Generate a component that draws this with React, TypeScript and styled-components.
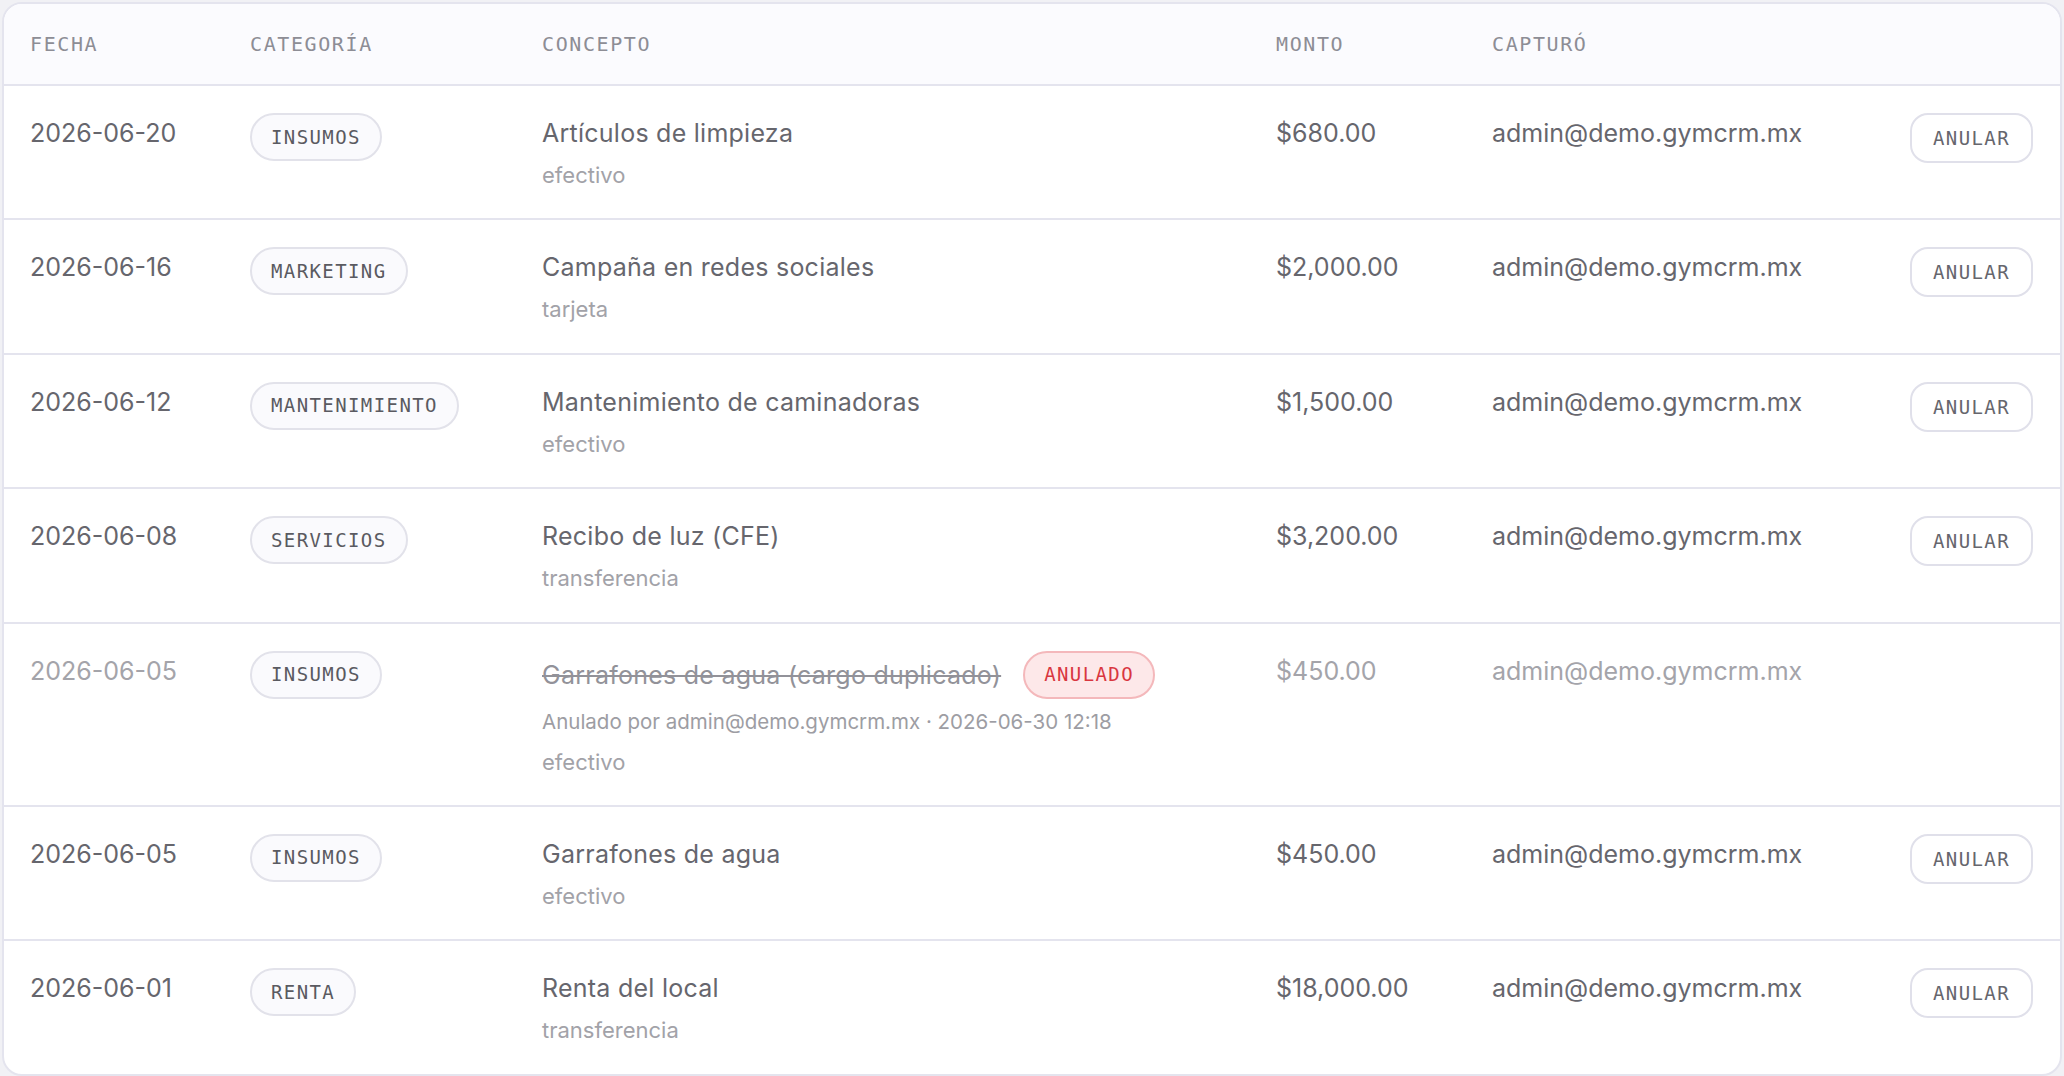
import React from 'react';
import styled, { createGlobalStyle } from 'styled-components';

const GlobalStyle = createGlobalStyle`
  html, body {
    margin: 0;
    padding: 0;
    background: #f1f1f5;
  }
  * {
    box-sizing: border-box;
  }
`;

const COLUMNS = '220px 292px 734px 216px 1fr 180px';
const SANS = `Inter, "Noto Sans", "Liberation Sans", sans-serif`;
const MONO = `"DejaVu Sans Mono", "Liberation Mono", monospace`;

const Page = styled.div`
  padding: 2px 2px 0 2px;
  height: 1076px;
  overflow: hidden;
`;

const Card = styled.div`
  background: #ffffff;
  border: 2px solid #e4e4ee;
  border-radius: 20px;
  overflow: hidden;
`;

const HeaderRow = styled.div`
  display: grid;
  grid-template-columns: ${COLUMNS};
  align-items: center;
  height: 82px;
  background: #fbfbfe;
  border-bottom: 2px solid #e4e4ee;
`;

const HeadCell = styled.div`
  padding-left: 26px;
  font-family: ${MONO};
  font-size: 20px;
  letter-spacing: 1.6px;
  color: #8d8d95;
`;

const Row = styled.div<{ $last?: boolean }>`
  display: grid;
  grid-template-columns: ${COLUMNS};
  align-items: start;
  padding: 27px 0 27.4px;
  border-bottom: ${p => (p.$last ? 'none' : '2px solid #e4e4ee')};
`;

const Cell = styled.div<{ $muted?: boolean }>`
  padding-left: 26px;
  font-family: ${SANS};
  font-size: 25px;
  line-height: 40px;
  color: ${p => (p.$muted ? '#a4a4aa' : '#66666d')};
  white-space: nowrap;
`;

const ActionCell = styled.div`
  display: flex;
  justify-content: flex-end;
  padding-right: 27px;
`;

const Pill = styled.span<{ $tone?: 'neutral' | 'danger' }>`
  display: inline-flex;
  align-items: center;
  height: 48px;
  padding: 0 19px;
  border-radius: 999px;
  border: 2px solid ${p => (p.$tone === 'danger' ? '#f4b8bb' : '#e2e2ea')};
  background: ${p => (p.$tone === 'danger' ? '#fde8e9' : '#fafafd')};
  color: ${p => (p.$tone === 'danger' ? '#d9363f' : '#5a5a61')};
  font-family: ${MONO};
  font-size: 19px;
  letter-spacing: 1.4px;
  line-height: 1;
`;

const VoidButton = styled.button`
  height: 50px;
  padding: 0 21px;
  border-radius: 18px;
  border: 2px solid #e0e0ea;
  background: #ffffff;
  color: #66666d;
  font-family: ${MONO};
  font-size: 19px;
  letter-spacing: 1.4px;
  cursor: pointer;
`;

const TitleLine = styled.div<{ $voided?: boolean }>`
  display: flex;
  align-items: center;
  gap: 22px;
  height: ${p => (p.$voided ? '48px' : '40px')};
`;

const Title = styled.span<{ $voided?: boolean }>`
  font-family: ${SANS};
  font-size: 25px;
  letter-spacing: 0.25px;
  color: ${p => (p.$voided ? '#929299' : '#66666d')};
  text-decoration: ${p => (p.$voided ? 'line-through' : 'none')};
  text-decoration-thickness: 2px;
`;

const VoidNote = styled.div`
  margin-top: 9px;
  font-family: ${SANS};
  font-size: 20.5px;
  line-height: 28px;
  color: #9d9da3;
`;

const Method = styled.div<{ $gap: number }>`
  margin-top: ${p => p.$gap}px;
  font-family: ${SANS};
  font-size: 22px;
  line-height: 32px;
  color: #a2a2a8;
`;

interface Expense {
  date: string;
  category: string;
  concept: string;
  method: string;
  amount: string;
  by: string;
  voidedNote?: string;
}

const expenses: Expense[] = [
  { date: '2026-06-20', category: 'INSUMOS', concept: 'Artículos de limpieza', method: 'efectivo', amount: '$680.00', by: 'admin@demo.gymcrm.mx' },
  { date: '2026-06-16', category: 'MARKETING', concept: 'Campaña en redes sociales', method: 'tarjeta', amount: '$2,000.00', by: 'admin@demo.gymcrm.mx' },
  { date: '2026-06-12', category: 'MANTENIMIENTO', concept: 'Mantenimiento de caminadoras', method: 'efectivo', amount: '$1,500.00', by: 'admin@demo.gymcrm.mx' },
  { date: '2026-06-08', category: 'SERVICIOS', concept: 'Recibo de luz (CFE)', method: 'transferencia', amount: '$3,200.00', by: 'admin@demo.gymcrm.mx' },
  {
    date: '2026-06-05',
    category: 'INSUMOS',
    concept: 'Garrafones de agua (cargo duplicado)',
    method: 'efectivo',
    amount: '$450.00',
    by: 'admin@demo.gymcrm.mx',
    voidedNote: 'Anulado por admin@demo.gymcrm.mx · 2026-06-30 12:18',
  },
  { date: '2026-06-05', category: 'INSUMOS', concept: 'Garrafones de agua', method: 'efectivo', amount: '$450.00', by: 'admin@demo.gymcrm.mx' },
  { date: '2026-06-01', category: 'RENTA', concept: 'Renta del local', method: 'transferencia', amount: '$18,000.00', by: 'admin@demo.gymcrm.mx' },
];

const App = () => {
  return (
    <Page>
      <GlobalStyle />
      <Card>
        <HeaderRow>
          <HeadCell>FECHA</HeadCell>
          <HeadCell>CATEGORÍA</HeadCell>
          <HeadCell>CONCEPTO</HeadCell>
          <HeadCell>MONTO</HeadCell>
          <HeadCell>CAPTURÓ</HeadCell>
          <HeadCell />
        </HeaderRow>
        {expenses.map((e, i) => {
          const voided = !!e.voidedNote;
          return (
            <Row key={i} $last={i === expenses.length - 1}>
              <Cell $muted={voided}>{e.date}</Cell>
              <Cell>
                <Pill>{e.category}</Pill>
              </Cell>
              <Cell>
                <TitleLine $voided={voided}>
                  <Title $voided={voided}>{e.concept}</Title>
                  {voided && <Pill $tone="danger">ANULADO</Pill>}
                </TitleLine>
                {voided && <VoidNote>{e.voidedNote}</VoidNote>}
                <Method $gap={voided ? 10 : 6}>{e.method}</Method>
              </Cell>
              <Cell $muted={voided}>{e.amount}</Cell>
              <Cell $muted={voided}>{e.by}</Cell>
              <ActionCell>{!voided && <VoidButton>ANULAR</VoidButton>}</ActionCell>
            </Row>
          );
        })}
      </Card>
    </Page>
  );
};

export default App;
